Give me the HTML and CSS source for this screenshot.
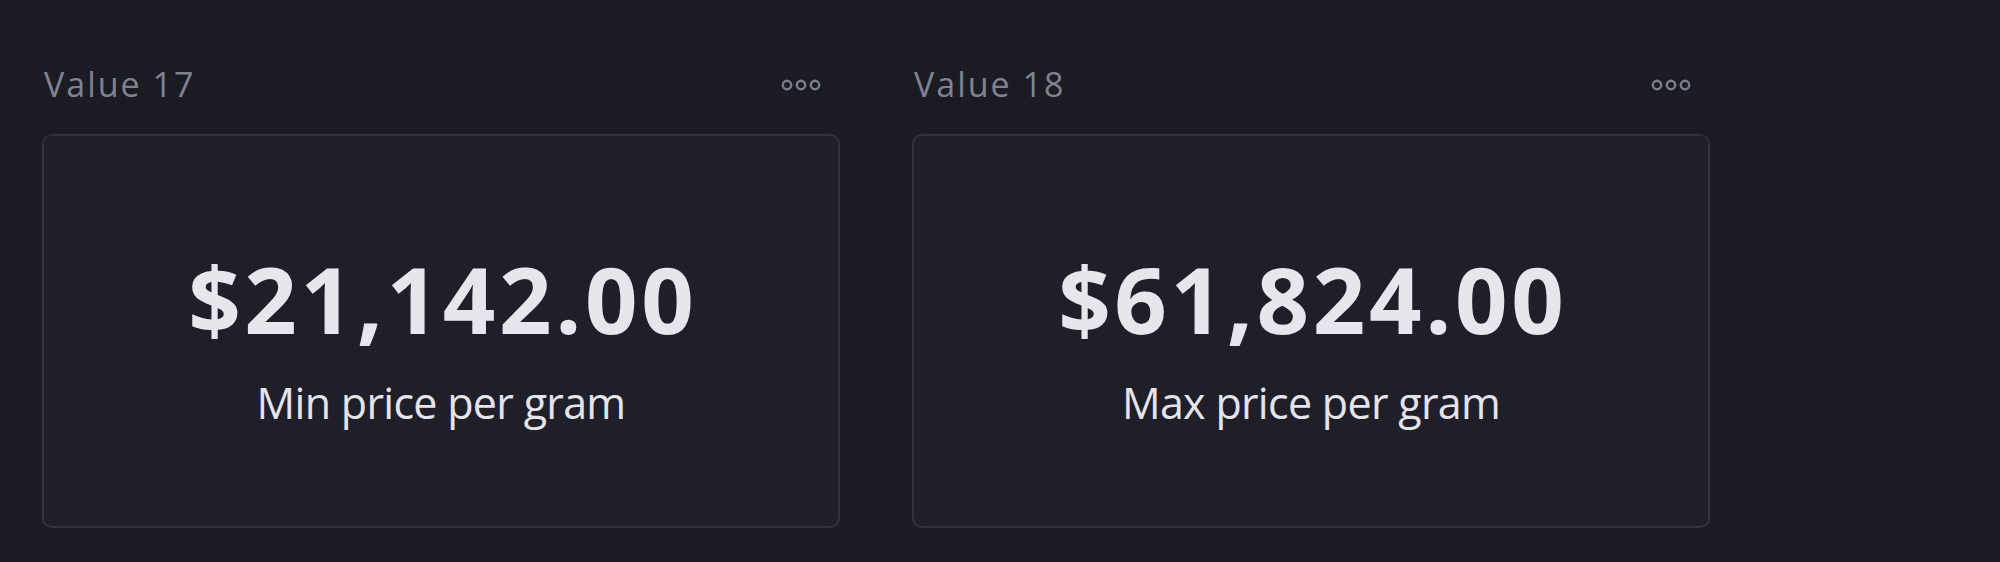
FILE: index.html
```html
<!DOCTYPE html>
<html lang="en">
<head>
<meta charset="utf-8">
<title>Values</title>
<link rel="stylesheet" href="styles.css">
</head>
<body>
<main class="grid">
  <section class="widget">
    <header class="widget-head">
      <h2 class="widget-title">Value 17</h2>
      <button class="more" aria-label="More options">
        <svg width="40" height="12" viewBox="0 0 40 12"><circle cx="6" cy="6" r="4.2"/><circle cx="20" cy="6" r="4.2"/><circle cx="34" cy="6" r="4.2"/></svg>
      </button>
    </header>
    <div class="card">
      <div class="value">$21,142.00</div>
      <div class="label">Min price per gram</div>
    </div>
  </section>
  <section class="widget">
    <header class="widget-head">
      <h2 class="widget-title">Value 18</h2>
      <button class="more" aria-label="More options">
        <svg width="40" height="12" viewBox="0 0 40 12"><circle cx="6" cy="6" r="4.2"/><circle cx="20" cy="6" r="4.2"/><circle cx="34" cy="6" r="4.2"/></svg>
      </button>
    </header>
    <div class="card">
      <div class="value">$61,824.00</div>
      <div class="label">Max price per gram</div>
    </div>
  </section>
</main>
</body>
</html>
```
FILE: styles.css
```css
html, body {
  margin: 0;
  padding: 0;
  background: #1b1b23;
}
body {
  font-family: "Open Sans", "Noto Sans", sans-serif;
  color: #e5e5eb;
}
.grid {
  display: flex;
  gap: 72px;
  padding: 64px 0 0 42px;
}
.widget {
  width: 798px;
  display: flex;
  flex-direction: column;
}
.widget-head {
  height: 40px;
  display: flex;
  align-items: center;
  justify-content: space-between;
  padding: 0 19px 0 2px;
  margin-bottom: 30px;
}
.widget-title {
  margin: 0;
  font-size: 34px;
  line-height: 40px;
  font-weight: 500;
  color: #7f8291;
  letter-spacing: 2px;
}
.more {
  background: none;
  border: 0;
  padding: 2px 0 0;
  display: flex;
}
.more circle {
  fill: none;
  stroke: #7a7d8c;
  stroke-width: 2.4;
}
.card {
  box-sizing: border-box;
  height: 394px;
  background: #1f1f29;
  border: 2px solid #32323e;
  border-radius: 10px;
  display: flex;
  flex-direction: column;
  align-items: center;
  padding-top: 117px;
}
.value {
  font-size: 92px;
  line-height: 92px;
  font-weight: 700;
  letter-spacing: 3.6px;
  margin-right: -3.6px;
  color: #e6e6ec;
}
.label {
  margin-top: 34px;
  font-size: 43px;
  line-height: 48px;
  font-weight: 400;
  letter-spacing: -0.7px;
  color: #e4e4ea;
}
```
